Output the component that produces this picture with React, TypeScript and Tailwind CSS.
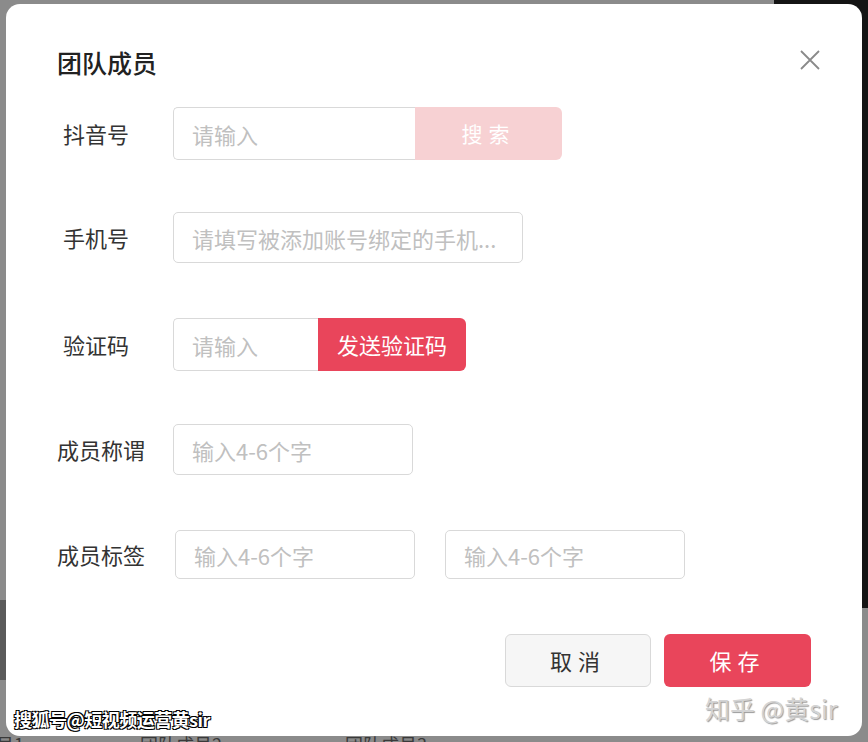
import React from "react";

const font = { fontFamily: '"Noto Sans CJK SC", "Noto Sans", sans-serif' };

const Label = ({ text, wide }: { text: string; wide?: boolean }) => (
  <div
    className={
      wide
        ? "w-[116px] shrink-0 text-[22px] text-[#333]"
        : "w-[116px] shrink-0 pl-[6px] text-[22px] text-[#333]"
    }
  >
    {text}
  </div>
);

const inputCls =
  "h-full border border-[#d9d9d9] bg-white pl-[18px] pr-[6px] text-[22px] text-[#333] outline-none placeholder:text-[#c0c0c0]";

const App = () => {
  return (
    <div
      className="relative w-[868px] h-[742px] overflow-hidden bg-[#8b8b8b]"
      style={font}
    >
      {/* page behind the dialog */}
      <div className="absolute right-0 top-0 w-[94px] h-[608px] bg-[#141414]" />
      <div className="absolute left-0 top-[600px] w-[8px] h-[80px] bg-[#5a5a5a]" />
      <div className="absolute left-[-22px] top-[731px] text-[18px] text-[#3a3a3a]">成员1</div>
      <div className="absolute left-[140px] top-[731px] text-[18px] text-[#3a3a3a]">团队成员2</div>
      <div className="absolute left-[345px] top-[731px] text-[18px] text-[#3a3a3a]">团队成员3</div>

      <div className="relative ml-[6px] mt-[4px] w-[856px] h-[732px] rounded-[14px] bg-white pl-[51px]">
        {/* header */}
        <div className="flex items-center justify-between pt-[42px] h-[75px] pr-[41px]">
          <div className="text-[25px] font-medium text-[#222]">团队成员</div>
          <svg width="22" height="22" viewBox="0 0 22 22" className="mt-[-6px]">
            <path
              d="M2 2 L20 20 M20 2 L2 20"
              stroke="#8a8a8a"
              strokeWidth="1.8"
              fill="none"
            />
          </svg>
        </div>

        {/* 抖音号 */}
        <div className="mt-[28px] flex h-[53px] items-center">
          <Label text="抖音号" />
          <div className="flex h-full">
            <input
              className={inputCls + " w-[242px] rounded-l-[5px] border-r-0"}
              placeholder="请输入"
            />
            <button className="w-[147px] h-full rounded-r-[6px] bg-[#f7d1d3] text-[21px] tracking-[6px] text-white">
              搜索
            </button>
          </div>
        </div>

        {/* 手机号 */}
        <div className="mt-[52px] flex h-[51px] items-center">
          <Label text="手机号" />
          <input
            className={inputCls + " w-[350px] rounded-[5px]"}
            placeholder="请填写被添加账号绑定的手机..."
          />
        </div>

        {/* 验证码 */}
        <div className="mt-[55px] flex h-[53px] items-center">
          <Label text="验证码" />
          <div className="flex h-full">
            <input
              className={inputCls + " w-[145px] rounded-l-[5px] border-r-0"}
              placeholder="请输入"
            />
            <button className="w-[148px] h-full rounded-r-[6px] bg-[#e9455b] text-[22px] text-white">
              发送验证码
            </button>
          </div>
        </div>

        {/* 成员称谓 */}
        <div className="mt-[53px] flex h-[51px] items-center">
          <Label text="成员称谓" wide />
          <input
            className={inputCls + " w-[240px] rounded-[5px]"}
            placeholder="输入4-6个字"
          />
        </div>

        {/* 成员标签 */}
        <div className="mt-[55px] flex h-[49px] items-center">
          <Label text="成员标签" wide />
          <div className="ml-[2px] flex h-full gap-[30px]">
            <input
              className={inputCls + " w-[240px] rounded-[5px]"}
              placeholder="输入4-6个字"
            />
            <input
              className={inputCls + " w-[240px] rounded-[5px]"}
              placeholder="输入4-6个字"
            />
          </div>
        </div>

        {/* footer */}
        <div className="mt-[55px] flex h-[53px] justify-end gap-[13px] pr-[51px]">
          <button className="w-[146px] h-full rounded-[6px] border border-[#d9d9d9] bg-[#f6f6f6] text-[22px] tracking-[6px] text-[#333]">
            取消
          </button>
          <button className="w-[147px] h-full rounded-[6px] bg-[#e9455b] text-[22px] tracking-[6px] text-white">
            保存
          </button>
        </div>
      </div>

      {/* watermarks */}
      <div
        className="absolute left-[14px] top-[706px] text-[18px] font-bold tracking-[-0.5px] text-white"
        style={{
          textShadow:
            "1px 1px 0 #000, -1px -1px 0 #000, 1px -1px 0 #000, -1px 1px 0 #000",
        }}
      >
        搜狐号@短视频运营黄sir
      </div>
      <div
        className="absolute left-[705px] top-[690px] text-[25px] text-[#d4d4d4]"
        style={{ textShadow: "1px 1px 1px #9a9a9a" }}
      >
        知乎 @黄sir
      </div>
    </div>
  );
};

export default App;
